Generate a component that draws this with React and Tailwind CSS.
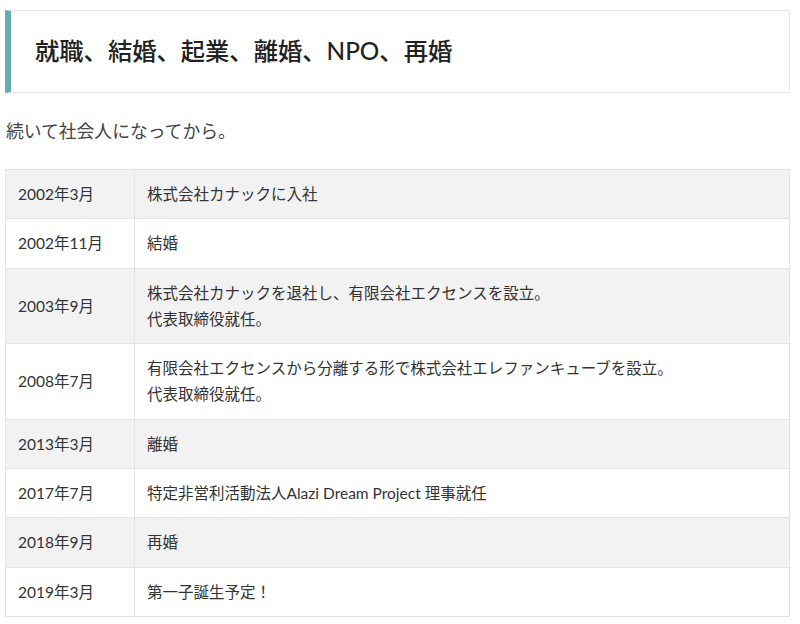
import React from "react";

const rows = [
  ["2002年3月", ["株式会社カナックに入社"]],
  ["2002年11月", ["結婚"]],
  ["2003年9月", ["株式会社カナックを退社し、有限会社エクセンスを設立。", "代表取締役就任。"]],
  ["2008年7月", ["有限会社エクセンスから分離する形で株式会社エレファンキューブを設立。", "代表取締役就任。"]],
  ["2013年3月", ["離婚"]],
  ["2017年7月", ["特定非営利活動法人Alazi Dream Project 理事就任"]],
  ["2018年9月", ["再婚"]],
  ["2019年3月", ["第一子誕生予定！"]],
];

export default function App() {
  return (
    <div
      className="bg-white w-[800px] h-[624px] overflow-hidden text-[#333]"
      style={{ fontFamily: 'Lato, "Noto Sans CJK JP", sans-serif' }}
    >
      <div className="ml-[5px] w-[785px] pt-[10px]">
        <div className="h-[83px] border border-[#e6e6e6] border-l-[6px] border-l-[#65adb5] flex items-center pl-[24px]">
          <h2 className="text-[24.3px] font-medium text-[#222] leading-none">
            就職、結婚、起業、離婚、NPO、再婚
          </h2>
        </div>
        <p className="mt-[25px] ml-[1px] text-[17.8px] leading-[26px] text-[#444]">
          続いて社会人になってから。
        </p>
        <table className="mt-[25px] w-full border-collapse text-[15.5px] text-[#333]">
          <tbody>
            {rows.map(([d, lines], i) => (
              <tr key={i} className={i % 2 === 0 ? "bg-[#f2f2f2]" : "bg-white"}>
                <td className="w-[129px] border border-[#e3e3e3] px-[12px] py-[11px] leading-[26.3px] align-middle">
                  {d}
                </td>
                <td className="border border-[#e3e3e3] px-[12px] py-[11px] leading-[26.3px] align-middle">
                  {lines.map((l, j) => (
                    <div key={j}>{l}</div>
                  ))}
                </td>
              </tr>
            ))}
          </tbody>
        </table>
      </div>
    </div>
  );
}
